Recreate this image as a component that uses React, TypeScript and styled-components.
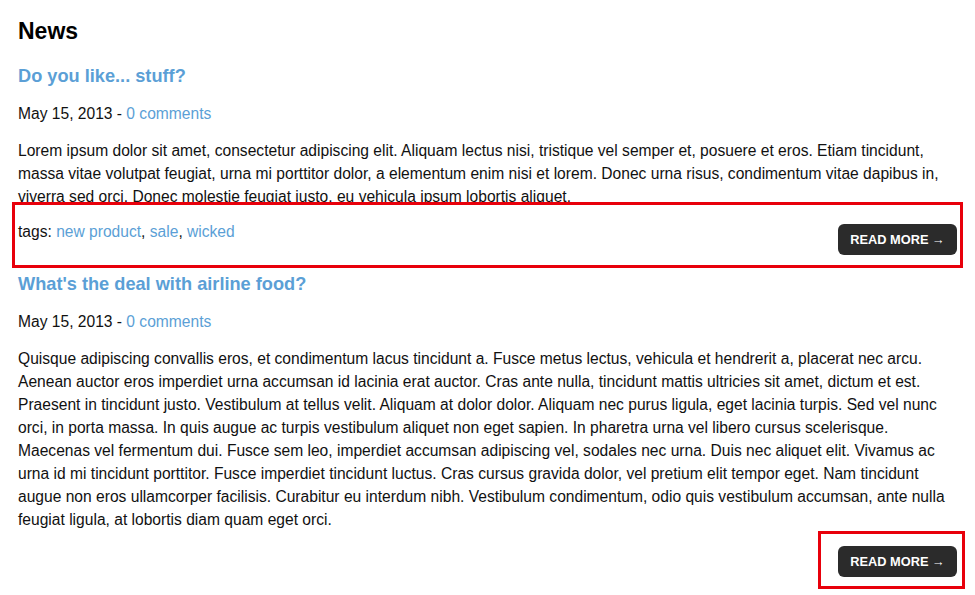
import React from "react";
import styled, { createGlobalStyle } from "styled-components";

const Global = createGlobalStyle`
  html, body { margin: 0; padding: 0; background: #fff; }
  body { font-family: "Liberation Sans", Arial, Helvetica, sans-serif; color: #111; }
`;

const Page = styled.div`
  padding: 18px 18px 0 18px;
`;

const Heading = styled.h1`
  margin: 0 0 20px 0;
  font-size: 23px;
  line-height: 26px;
  font-weight: bold;
  color: #000;
`;

const Post = styled.article`
  display: flex;
  flex-direction: column;
  margin-bottom: 17px;
`;

const Title = styled.h2`
  margin: 0 0 14px 0;
  font-size: 18.2px;
  line-height: 24px;
  font-weight: bold;
  color: #5b9fd6;
`;

const Meta = styled.p`
  margin: 0 0 14px 0;
  font-size: 15.6px;
  line-height: 23px;
`;

const Link = styled.a`
  color: #5b9fd6;
  text-decoration: none;
`;

const Body = styled.p`
  margin: 0;
  font-size: 15.6px;
  line-height: 23px;
`;

const Footer = styled.div`
  position: relative;
  display: flex;
  justify-content: space-between;
  align-items: flex-start;
  margin-top: 12px;
  min-height: 34.5px;
`;

const Tags = styled.p`
  margin: 0;
  font-size: 15.6px;
  line-height: 23px;
`;

const Button = styled.a`
  margin-top: 3.5px;
  margin-left: auto;
  display: flex;
  align-items: center;
  justify-content: center;
  height: 31px;
  width: 119px;
  box-sizing: border-box;
  border-radius: 6px;
  background: #2b2b2b;
  color: #fff;
  font-size: 12.8px;
  font-weight: bold;
  text-transform: uppercase;
  text-decoration: none;
`;

const ButtonWrap = styled.div`
  position: relative;
  margin-left: auto;
  display: flex;
`;

const Highlight = styled.div<{ $t: number; $r: number; $b: number; $l: number }>`
  position: absolute;
  top: ${(p) => p.$t}px;
  right: ${(p) => p.$r}px;
  bottom: ${(p) => p.$b}px;
  left: ${(p) => p.$l}px;
  border: 3.5px solid #e8000b;
  pointer-events: none;
`;

export default function App() {
  return (
    <>
      <Global />
      <Page>
        <Heading>News</Heading>
        <Post>
          <Title>Do you like... stuff?</Title>
          <Meta>
            May 15, 2013 - <Link href="#">0 comments</Link>
          </Meta>
          <Body>
            Lorem ipsum dolor sit amet, consectetur adipiscing elit. Aliquam lectus nisi, tristique vel semper et,
            posuere et eros. Etiam tincidunt, massa vitae volutpat feugiat, urna mi porttitor dolor, a elementum enim
            nisi et lorem. Donec urna risus, condimentum vitae dapibus in, viverra sed orci. Donec molestie feugiat
            justo, eu vehicula ipsum lobortis aliquet.
          </Body>
          <Footer>
            <Tags>
              tags: <Link href="#">new product</Link>, <Link href="#">sale</Link>, <Link href="#">wicked</Link>
            </Tags>
            <Button href="#">Read more →</Button>
            <Highlight $t={-18.5} $r={-6} $b={-13} $l={-6} />
          </Footer>
        </Post>
        <Post>
          <Title>What's the deal with airline food?</Title>
          <Meta>
            May 15, 2013 - <Link href="#">0 comments</Link>
          </Meta>
          <Body>
            Quisque adipiscing convallis eros, et condimentum lacus tincidunt a. Fusce metus lectus, vehicula et
            hendrerit a, placerat nec arcu. Aenean auctor eros imperdiet urna accumsan id lacinia erat auctor. Cras
            ante nulla, tincidunt mattis ultricies sit amet, dictum et est. Praesent in tincidunt justo. Vestibulum at
            tellus velit. Aliquam at dolor dolor. Aliquam nec purus ligula, eget lacinia turpis. Sed vel nunc orci, in
            porta massa. In quis augue ac turpis vestibulum aliquet non eget sapien. In pharetra urna vel libero cursus
            scelerisque. Maecenas vel fermentum dui. Fusce sem leo, imperdiet accumsan adipiscing vel, sodales nec
            urna. Duis nec aliquet elit. Vivamus ac urna id mi tincidunt porttitor. Fusce imperdiet tincidunt luctus.
            Cras cursus gravida dolor, vel pretium elit tempor eget. Nam tincidunt augue non eros ullamcorper
            facilisis. Curabitur eu interdum nibh. Vestibulum condimentum, odio quis vestibulum accumsan, ante nulla
            feugiat ligula, at lobortis diam quam eget orci.
          </Body>
          <Footer>
            <ButtonWrap>
              <Button href="#">Read more →</Button>
              <Highlight $t={-11.5} $r={-8} $b={-12} $l={-20} />
            </ButtonWrap>
          </Footer>
        </Post>
      </Page>
    </>
  );
}
